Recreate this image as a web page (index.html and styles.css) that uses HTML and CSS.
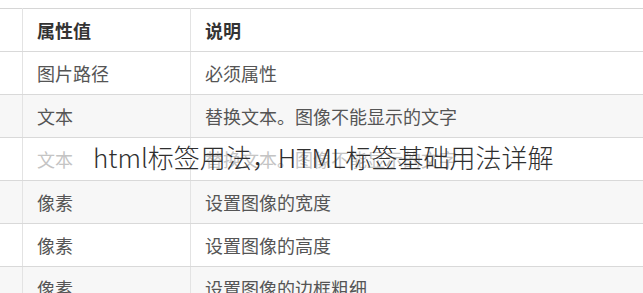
FILE: index.html
```html
<!DOCTYPE html>
<html lang="zh-CN">
<head>
  <meta charset="utf-8">
  <title>html标签用法，HTML标签基础用法详解</title>
  <link rel="stylesheet" href="styles.css">
</head>
<body>
  <div class="page">
    <table class="attr-table">
      <tr>
        <th class="col-name"></th>
        <th class="col-value">属性值</th>
        <th>说明</th>
      </tr>
      <tr>
        <td></td>
        <td>图片路径</td>
        <td>必须属性</td>
      </tr>
      <tr class="alt">
        <td></td>
        <td>文本</td>
        <td>替换文本。图像不能显示的文字</td>
      </tr>
      <tr class="faded">
        <td></td>
        <td>文本</td>
        <td>替换文本。图像不能显示的文字</td>
      </tr>
      <tr class="alt">
        <td></td>
        <td>像素</td>
        <td>设置图像的宽度</td>
      </tr>
      <tr>
        <td></td>
        <td>像素</td>
        <td>设置图像的高度</td>
      </tr>
      <tr class="alt">
        <td></td>
        <td>像素</td>
        <td>设置图像的边框粗细</td>
      </tr>
    </table>

    <!-- 标题压在表格上 -->
    <h1 class="title">html标签用法，HTML标签基础用法详解</h1>
  </div>
</body>
</html>
```

FILE: styles.css
```css
body {
  margin: 0;
  background-color: #fff;
  font-family: "Noto Sans CJK SC", "Noto Sans", sans-serif;
  overflow: hidden;
}
.page {
  position: relative;
  padding-top: 8px;
}
.attr-table {
  width: 100%;
  border-collapse: collapse;
  border-top: 1px solid #d6d6d6;
}
.attr-table tr {
  height: 43px;
}
.attr-table th,
.attr-table td {
  padding: 0 0 0 14px;
  text-align: left;
  font-size: 18px;
  border-bottom: 1px solid #d9d9d9;
  border-left: 1px solid #e3e3e3;
  color: #555;
  font-weight: normal;
  white-space: nowrap;
}
.attr-table th {
  color: #333;
  font-weight: bold;
}
.attr-table tr > :first-child {
  border-left: none;
  padding: 0;
}
.col-name {
  width: 22px;
}
.col-value {
  width: 153px;
}
.alt {
  background-color: #f7f7f7;
}
.faded td {
  color: #c4c4c4;
}
.title {
  position: absolute;
  top: 136px;
  left: 93px;
  margin: 0;
  font-size: 26px;
  font-weight: 300;
  color: #2f2f2f;
  line-height: 42px;
}
```
